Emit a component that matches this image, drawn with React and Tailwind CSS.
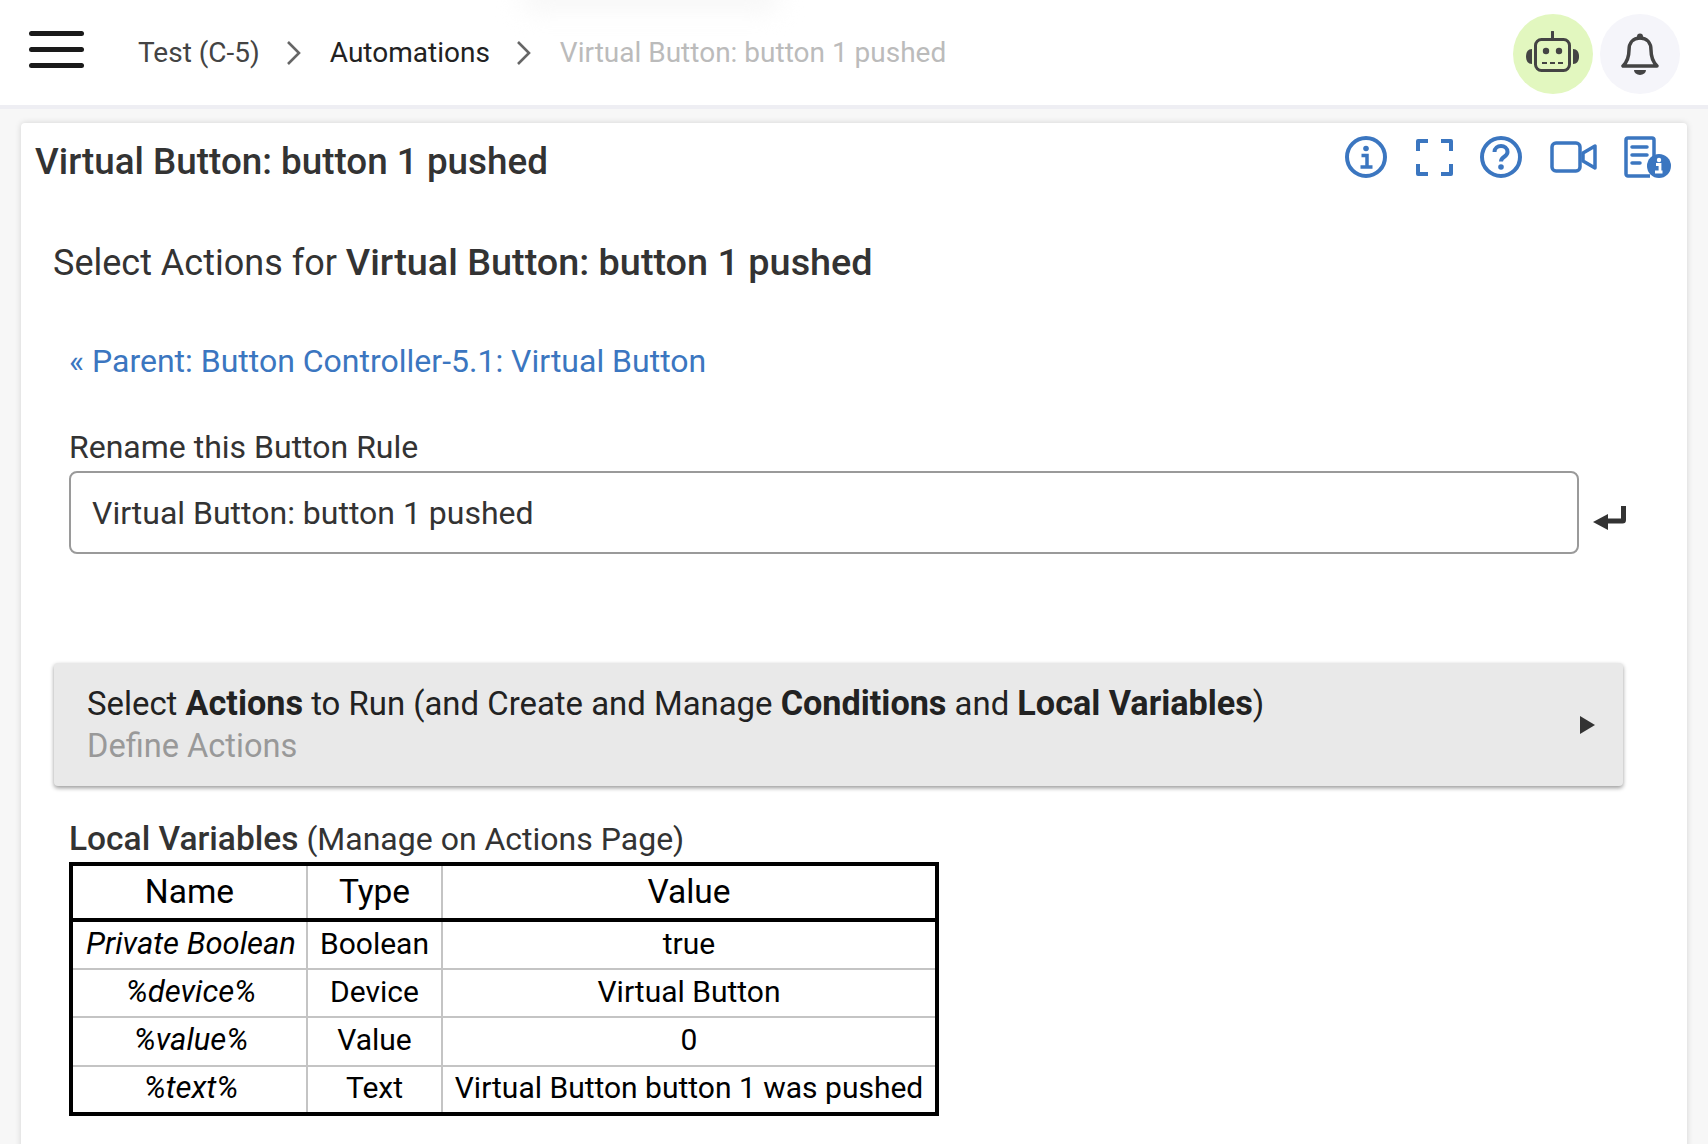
const Chevron = () => (
  <svg width="16" height="26" viewBox="0 0 16 26" fill="none" stroke="#666" strokeWidth="2.6">
    <path d="M2 2l11 11L2 24" />
  </svg>
);

const cells = [
  ["Private Boolean", "Boolean", "true"],
  ["%device%", "Device", "Virtual Button"],
  ["%value%", "Value", "0"],
  ["%text%", "Text", "Virtual Button button 1 was pushed"],
];

const App = () => {
  return (
    <div className="relative w-[1708px] h-[1144px] overflow-hidden bg-[#f7f7f7] font-['Roboto',sans-serif] text-[#333]">
      {/* Top bar */}
      <header className="h-[109px] bg-white border-b-4 border-[#eeeef3] flex items-center pl-[29px] pr-[28px]">
        <div className="w-[55px] h-[37px] -mt-[6px] flex flex-col justify-between">
          <div className="h-[5px] rounded-full bg-[#1a1a1a]"></div>
          <div className="h-[5px] rounded-full bg-[#1a1a1a]"></div>
          <div className="h-[5px] rounded-full bg-[#1a1a1a]"></div>
        </div>
        <nav className="flex items-center ml-[54px] text-[28px]">
          <span className="text-[#444]">Test (C-5)</span>
          <span className="ml-[26px] mr-[28px]"><Chevron /></span>
          <span className="text-[#222]">Automations</span>
          <span className="ml-[26px] mr-[28px]"><Chevron /></span>
          <span className="text-[#bbb]">Virtual Button: button 1 pushed</span>
        </nav>
        <div className="ml-auto flex items-center gap-[7px] mt-[2px]">
          <div className="w-[80px] h-[80px] rounded-full bg-[#e2f7bf] flex items-center justify-center">
            <svg className="-mt-[4px] -ml-[2px]" width="53" height="41" viewBox="0 0 53 41" fill="none" stroke="#444" strokeWidth="3">
              <rect x="9.5" y="8.5" width="34" height="31" rx="6" />
              <path d="M26.5 8V1" strokeLinecap="round" />
              <circle cx="20" cy="20" r="3.2" fill="#444" stroke="none" />
              <circle cx="33" cy="20" r="3.2" fill="#444" stroke="none" />
              <path d="M16 32h21" strokeDasharray="5 3" strokeWidth="2.2" />
              <path d="M6 18C2 18 0 21 0 25.5S2 33 6 33z" fill="#444" stroke="none" />
              <path d="M47 18c4 0 6 3 6 7.5S51 33 47 33z" fill="#444" stroke="none" />
            </svg>
          </div>
          <div className="w-[80px] h-[80px] rounded-full bg-[#f5f5fa] flex items-center justify-center">
            <svg width="38" height="42" viewBox="0 0 38 42" fill="none" stroke="#444" strokeWidth="3.5">
              <path d="M19 5c-7 0-11 5-11 12 0 8-2 12-6 16h34c-4-4-6-8-6-16 0-7-4-12-11-12z" strokeLinejoin="round" />
              <circle cx="19" cy="3.5" r="3" fill="#444" stroke="none" />
              <path d="M13 37h12a6 5 0 0 1-12 0z" fill="#444" stroke="none" />
            </svg>
          </div>
        </div>
      </header>

      {/* faint smudge at the top edge */}
      <div className="absolute left-[520px] -top-[14px] w-[260px] h-[24px] rounded-full bg-[#f6f6f6] blur-md"></div>

      {/* Card */}
      <main className="ml-[21px] mr-[21px] mt-[14px] h-[1100px] bg-white rounded-[4px] shadow-[0_0_6px_rgba(0,0,0,0.15)]">
        <div className="flex items-center justify-between pl-[14px] pr-[16px] pt-[16px] h-[60px]">
          <h1 className="text-[36.800px] font-medium leading-[42px] mt-[2px]">Virtual Button: button 1 pushed</h1>
          <div className="flex items-center -mt-[8px]">
            <svg width="42" height="42" viewBox="0 0 42 42" fill="none" stroke="#3b76c0" strokeWidth="4">
              <circle cx="21" cy="21" r="19" />
              <circle cx="21" cy="12.500" r="2.800" fill="#3b76c0" stroke="none" />
              <path d="M16.500 19.500H22V31M15.500 31h12" strokeWidth="3.500" />
            </svg>
            <svg className="ml-[29px]" width="37" height="37" viewBox="0 0 37 37" fill="none" stroke="#3b76c0" strokeWidth="4" strokeLinejoin="round">
              <path d="M2 12V2h10M25 2h10v10M35 25v10H25M12 35H2V25" />
            </svg>
            <svg className="ml-[27px]" width="42" height="42" viewBox="0 0 42 42" fill="none" stroke="#3b76c0" strokeWidth="4">
              <circle cx="21" cy="21" r="19" />
              <path d="M14.500 16c0-8 13-8 13 0 0 5-6.500 4.500-6.500 9.500" />
              <circle cx="21" cy="31" r="2.800" fill="#3b76c0" stroke="none" />
            </svg>
            <svg className="ml-[28px]" width="47" height="32" viewBox="0 0 47 32" fill="none" stroke="#3b76c0" strokeWidth="3.500" strokeLinejoin="round">
              <rect x="2" y="2" width="28" height="28" rx="4" />
              <path d="M33 12l12-7v22l-12-7z" />
            </svg>
            <svg className="ml-[27px]" width="47" height="42" viewBox="0 0 47 42" fill="none" stroke="#3b76c0" strokeWidth="3.500">
              <path d="M26 40H4a2 2 0 0 1-2-2V4a2 2 0 0 1 2-2h24a2 2 0 0 1 2 2v20" strokeLinejoin="round" />
              <path d="M8 11h15M8 19h15M8 27h8" strokeLinecap="round" />
              <circle cx="35" cy="30" r="12" fill="#3b76c0" stroke="none" />
              <circle cx="35" cy="24" r="2.200" fill="#fff" stroke="none" />
              <path d="M32 28.500h4V36M31 36h7.500" stroke="#fff" strokeWidth="2.800" />
            </svg>
          </div>
        </div>

        <div className="pl-[32px] pr-[48px]">
          <h2 className="text-[36px] leading-[42px] mt-[58px]">
            Select Actions for <span className="font-medium text-[37.800px]">Virtual Button: button 1 pushed</span>
          </h2>
          <a className="block ml-[16px] mt-[58px] text-[32px] leading-[38px] text-[#3b76c0]">« Parent: Button Controller-5.1: Virtual Button</a>

          <label className="block ml-[16px] mt-[48px] text-[32px] leading-[38px]">Rename this Button Rule</label>
          <div className="ml-[16px] mt-[5px] flex items-center">
            <div className="w-[1510px] shrink-0 h-[83px] border-2 border-[#9a9a9a] rounded-[8px] flex items-center pl-[21px] text-[32px]">
              Virtual Button: button 1 pushed
            </div>
            <svg className="ml-[14px] mt-[11px] shrink-0" width="34" height="24" viewBox="0 0 34 24" fill="#333">
              <path d="M0 16L15 8v4.500h13V0h5v14a3.500 3.500 0 0 1-3.500 3.500H15V24z" />
            </svg>
          </div>

          {/* Accordion */}
          <div className="mt-[109px] ml-[1px] w-[1569px] h-[123px] bg-[#e9e9e9] rounded-[4px] shadow-[0_2px_4px_rgba(0,0,0,0.4)] flex items-center justify-between pl-[33px] pr-[28px]">
            <div>
              <div className="text-[32.900px] leading-[42px] text-[#222]">
                Select <span className="font-bold text-[34.200px]">Actions</span> to Run (and Create and Manage <span className="font-bold text-[34.200px]">Conditions</span> and <span className="font-bold text-[34.200px]">Local Variables</span>)
              </div>
              <div className="text-[32.600px] leading-[42px] text-[#999]">Define Actions</div>
            </div>
            <svg width="15" height="18" viewBox="0 0 15 18" fill="#333"><path d="M0 0l15 9L0 18z" /></svg>
          </div>

          <div className="ml-[16px] mt-[32px] text-[32px] leading-[42px]">
            <span className="font-medium text-[33.500px]">Local Variables</span> (Manage on Actions Page)
          </div>

          <table className="ml-[16px] mt-[2px] border-collapse border-[4px] border-black text-[30px] text-center text-black">
            <thead>
              <tr className="h-[56px] border-b-[4px] border-black text-[33.500px]">
                <th className="font-normal w-[236px] border-r-2 border-[#c4c4c4]">Name</th>
                <th className="font-normal w-[135px] border-r-2 border-[#c4c4c4]">Type</th>
                <th className="font-normal w-[495px]">Value</th>
              </tr>
            </thead>
            <tbody>
              {cells.map((row, idx) => (
                <tr key={idx} className="h-[48.500px] leading-[40px] border-b-2 border-[#c4c4c4] last:border-b-0">
                  <td className="italic text-[31px] pl-[3px] pb-[2px] whitespace-nowrap border-r-2 border-[#c4c4c4]">{row[0]}</td>
                  <td className="pb-[2px] border-r-2 border-[#c4c4c4]">{row[1]}</td>
                  <td className="pb-[2px]">{row[2]}</td>
                </tr>
              ))}
            </tbody>
          </table>
        </div>
      </main>
    </div>
  );
};

export default App;
